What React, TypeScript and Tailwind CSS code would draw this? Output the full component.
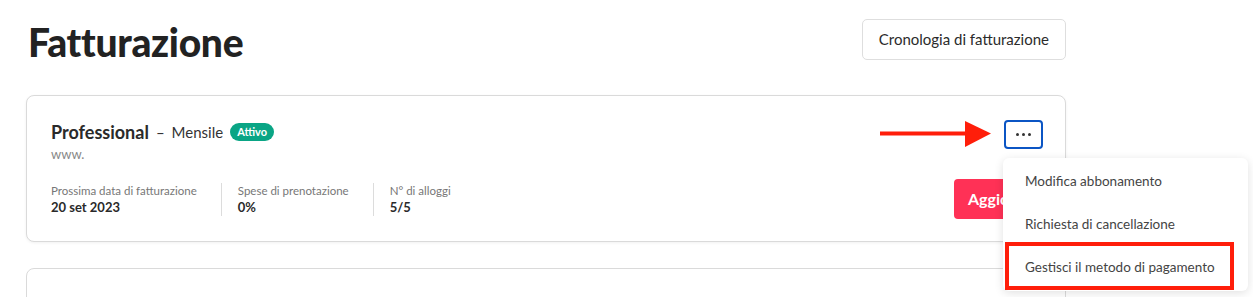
import React from 'react';

// ─── Stat column ─────────────────────────────────────────────────────────────

function Stat({ label, value, last }: { label: string; value: string; last?: boolean }) {
  return (
    <div className={`flex flex-col ${last ? '' : 'border-r border-[#dcdcdc] pr-[24px]'}`}>
      <span className="text-[11.5px] leading-[16px] text-[#777]">{label}</span>
      <span className="text-[13px] leading-[17px] font-bold text-[#2a2a2a]">{value}</span>
    </div>
  );
}

// ─── Page ────────────────────────────────────────────────────────────────────

export default function App() {
  return (
    <div
      className="relative h-[297px] w-[1253px] overflow-hidden bg-white text-[#333]"
      style={{ fontFamily: 'Lato, "Noto Sans", sans-serif' }}
    >
      <div className="ml-[26px] w-[1040px]">
        {/* Header */}
        <div className="flex items-start justify-between pt-[19px]">
          <h1 className="pl-[2px] text-[39px] font-black leading-[46px] tracking-[-0.3px] text-[#222]">
            Fatturazione
          </h1>
          <button className="h-[41px] rounded-[5px] border border-[#dedede] bg-white px-4 text-[15px] text-[#2b2b2b]">
            Cronologia di fatturazione
          </button>
        </div>

        {/* Subscription card */}
        <div className="mt-[30px] flex h-[147px] justify-between rounded-[8px] border border-[#dadada] bg-white pl-[24px] pr-[22px] pt-[24px] shadow-[0_1px_3px_rgba(0,0,0,0.06)]">
          <div className="flex flex-col">
            <div className="flex h-[24px] items-center">
              <span className="text-[18px] font-bold text-[#2a2a2a]">Professional</span>
              <span className="ml-[7px] text-[15px] text-[#333]">–</span>
              <span className="ml-[7px] text-[15px] text-[#333]">Mensile</span>
              <span className="ml-[7px] rounded-full bg-[#0aa585] px-[7px] py-[2px] text-[11px] font-bold leading-[14px] text-white">
                Attivo
              </span>
            </div>
            <span className="mt-[1px] text-[13px] leading-[18px] text-[#888]">www.</span>
            <div className="mt-[20px] flex gap-4">
              <Stat label="Prossima data di fatturazione" value="20 set 2023" />
              <Stat label="Spese di prenotazione" value="0%" />
              <Stat label="N° di alloggi" value="5/5" last />
            </div>
          </div>
          <div className="flex flex-col items-end">
            <button className="flex h-[29px] w-[39px] items-center justify-center gap-[3px] rounded-[4px] border-2 border-[#0b55c4] bg-white">
              <span className="h-[3px] w-[3px] rounded-full bg-[#333]" />
              <span className="h-[3px] w-[3px] rounded-full bg-[#333]" />
              <span className="h-[3px] w-[3px] rounded-full bg-[#333]" />
            </button>
            <button className="mt-[30px] h-[40px] w-[89px] rounded-[4px] bg-[#ff3156] pl-[14px] text-left text-[16px] font-bold text-white">
              Aggiorna
            </button>
          </div>
        </div>

        {/* Next card */}
        <div className="mt-[26px] h-[60px] rounded-[8px] border border-[#dadada] bg-white" />
      </div>

      {/* Red arrow annotation */}
      <svg className="absolute left-[878px] top-[119px]" width="116" height="30" viewBox="0 0 116 30">
        <line x1="2" y1="14.5" x2="90" y2="14.5" stroke="#ff1e0a" strokeWidth="4" />
        <polygon points="87,2 113,14.5 87,28" fill="#ff1e0a" />
      </svg>

      {/* Dropdown menu */}
      <div className="absolute left-[1003px] top-[158px] w-[245px] rounded-[6px] bg-white pt-[2px] shadow-[0_2px_10px_rgba(0,0,0,0.12)]">
        {['Modifica abbonamento', 'Richiesta di cancellazione', 'Gestisci il metodo di pagamento'].map((item) => (
          <div key={item} className="flex h-[43px] items-center pl-[22px] text-[13.5px] text-[#444]">
            {item}
          </div>
        ))}
        <div className="h-[2px]" />
      </div>

      {/* Highlight box */}
      <div className="absolute left-[1005px] top-[242px] h-[48px] w-[229px] border-[4px] border-[#ff1e0a]" />
    </div>
  );
}
